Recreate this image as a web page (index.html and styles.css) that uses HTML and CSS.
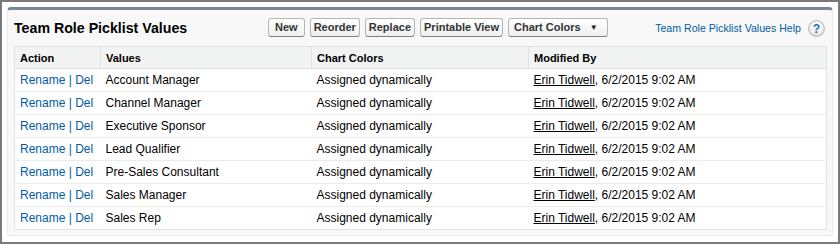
FILE: index.html
```html
<!DOCTYPE html>
<html>
<head>
<meta charset="utf-8">
<link rel="stylesheet" href="styles.css">
</head>
<body>
<div class="frame">
  <div class="block">
    <div class="block-head">
      <h2 class="title">Team Role Picklist Values</h2>
      <div class="buttons">
        <button class="btn btn-wide">New</button>
        <button class="btn">Reorder</button>
        <button class="btn">Replace</button>
        <button class="btn">Printable View</button>
        <button class="btn btn-menu">Chart Colors <span class="arrow">&#9660;</span></button>
      </div>
      <div class="help">
        <a class="help-link" href="#">Team Role Picklist Values Help</a>
        <svg class="help-icon" width="17" height="17" viewBox="0 0 17 17">
          <defs>
            <linearGradient id="hg" x1="0" y1="0" x2="0" y2="1">
              <stop offset="0" stop-color="#ffffff"/>
              <stop offset="1" stop-color="#e6e6e6"/>
            </linearGradient>
          </defs>
          <circle cx="8.5" cy="8.5" r="7.8" fill="url(#hg)" stroke="#a9a9a9" stroke-width="1"/>
          <text x="8.5" y="13" text-anchor="middle" class="q">?</text>
        </svg>
      </div>
    </div>
    <table class="list">
      <thead>
        <tr>
          <th class="c-action">Action</th>
          <th class="c-values">Values</th>
          <th class="c-chart">Chart Colors</th>
          <th class="c-mod">Modified By</th>
        </tr>
      </thead>
      <tbody>
        <tr><td class="act"><a href="#">Rename</a> | <a href="#">Del</a></td><td>Account Manager</td><td>Assigned dynamically</td><td><a class="user" href="#">Erin Tidwell</a>, 6/2/2015 9:02 AM</td></tr>
        <tr><td class="act"><a href="#">Rename</a> | <a href="#">Del</a></td><td>Channel Manager</td><td>Assigned dynamically</td><td><a class="user" href="#">Erin Tidwell</a>, 6/2/2015 9:02 AM</td></tr>
        <tr><td class="act"><a href="#">Rename</a> | <a href="#">Del</a></td><td>Executive Sponsor</td><td>Assigned dynamically</td><td><a class="user" href="#">Erin Tidwell</a>, 6/2/2015 9:02 AM</td></tr>
        <tr><td class="act"><a href="#">Rename</a> | <a href="#">Del</a></td><td>Lead Qualifier</td><td>Assigned dynamically</td><td><a class="user" href="#">Erin Tidwell</a>, 6/2/2015 9:02 AM</td></tr>
        <tr><td class="act"><a href="#">Rename</a> | <a href="#">Del</a></td><td>Pre-Sales Consultant</td><td>Assigned dynamically</td><td><a class="user" href="#">Erin Tidwell</a>, 6/2/2015 9:02 AM</td></tr>
        <tr><td class="act"><a href="#">Rename</a> | <a href="#">Del</a></td><td>Sales Manager</td><td>Assigned dynamically</td><td><a class="user" href="#">Erin Tidwell</a>, 6/2/2015 9:02 AM</td></tr>
        <tr><td class="act"><a href="#">Rename</a> | <a href="#">Del</a></td><td>Sales Rep</td><td>Assigned dynamically</td><td><a class="user" href="#">Erin Tidwell</a>, 6/2/2015 9:02 AM</td></tr>
      </tbody>
    </table>
  </div>
</div>
</body>
</html>
```
FILE: styles.css
```css
html, body {
  margin: 0;
  padding: 0;
  background: #ffffff;
}
body {
  font-family: "Liberation Sans", Arial, sans-serif;
  font-size: 12px;
  color: #000;
}
.frame {
  width: 840px;
  height: 244px;
  box-sizing: border-box;
  border: 2px solid #7a7a7a;
  padding: 5px 5px 0 5px;
  background: #fff;
}
.block {
  box-sizing: border-box;
  width: 826px;
  height: 229px;
  background: #f8f8f8;
  border: 1px solid #eaeaea;
  border-top: 3px solid #7a8499;
  border-radius: 4px;
  padding: 0 5px 0 6px;
}
.block-head {
  display: flex;
  align-items: center;
  height: 36px;
}
.title {
  margin: 0;
  font-size: 14.2px;
  font-weight: bold;
  color: #000;
  width: 254px;
  padding-left: 0;
}
.buttons {
  display: flex;
  gap: 5px;
  margin-top: -1px;
}
.btn {
  font-family: "Liberation Sans", Arial, sans-serif;
  font-size: 11px;
  font-weight: bold;
  color: #333;
  height: 19px;
  padding: 0 3px;
  margin: 0;
  border: 1px solid #b5b5b5;
  border-bottom-color: #7f7f7f;
  border-radius: 3px;
  background: linear-gradient(#ffffff, #efefef);
  line-height: 17px;
}
.btn-wide {
  padding: 0 6px;
}
.btn-menu {
  padding: 0 9px 0 5px;
  display: flex;
  align-items: center;
  gap: 9px;
}
.arrow {
  font-size: 8px;
  color: #222;
}
.help {
  margin-left: auto;
  display: flex;
  align-items: center;
  gap: 7px;
  margin-right: 2px;
}
.help-link {
  color: #015ba7;
  text-decoration: none;
  font-size: 10.6px;
}
.help-icon {
  display: block;
}
.help-icon .q {
  font-family: "Liberation Sans", Arial, sans-serif;
  font-weight: bold;
  font-size: 12px;
  fill: #1b74c8;
}
.list {
  width: 813px;
  border-collapse: collapse;
  background: #fff;
  border: 1px solid #e0e3e5;
  table-layout: fixed;
}
.list th {
  background: #f2f3f3;
  font-size: 11px;
  font-weight: bold;
  color: #000;
  text-align: left;
  height: 22px;
  padding: 0 5px;
  border-left: 1px solid #e0e3e5;
  border-bottom: 1px solid #e0e3e5;
  box-sizing: border-box;
}
.list th:first-child {
  border-left: none;
}
.c-action { width: 86px; }
.c-values { width: 211px; }
.c-chart { width: 217px; }
.list td {
  height: 22px;
  padding: 0 5px;
  border-bottom: 1px solid #ececec;
  white-space: nowrap;
  color: #000;
}
.list tbody tr:last-child td {
  border-bottom: none;
}
.list td.act {
  padding-left: 5px;
  color: #015ba7;
}
.list td.act a {
  color: #015ba7;
  text-decoration: none;
}
.user {
  color: #000;
  text-decoration: underline;
}
```
